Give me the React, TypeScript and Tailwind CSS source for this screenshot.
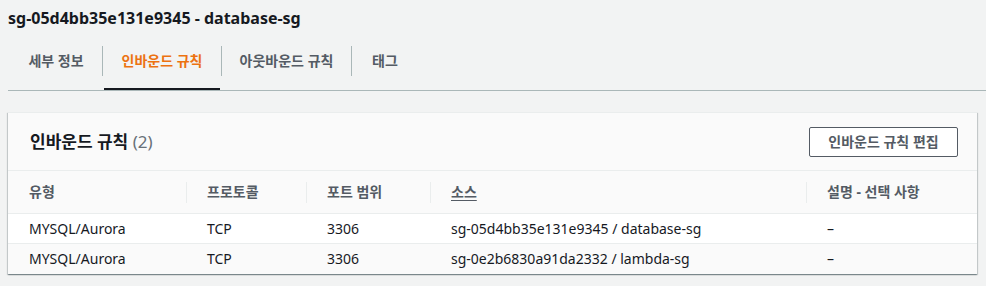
import React from 'react';

const font = { fontFamily: '"Noto Sans", "Noto Sans CJK KR", sans-serif' };

const tabs = [
  { label: '세부 정보', width: 'w-[92px]' },
  { label: '인바운드 규칙', width: 'w-[118px]', active: true },
  { label: '아웃바운드 규칙', width: 'w-[129px]' },
  { label: '태그', width: 'w-[66px]' },
];

const columns = ['유형', '프로토콜', '포트 범위', '소스', '설명 - 선택 사항'];

const rows = [
  ['MYSQL/Aurora', 'TCP', '3306', 'sg-05d4bb35e131e9345 / database-sg', '–'],
  ['MYSQL/Aurora', 'TCP', '3306', 'sg-0e2b6830a91da2332 / lambda-sg', '–'],
];

export default function App() {
  return (
    <div className="w-full h-[286px] bg-[#f2f3f3] overflow-hidden" style={font}>
      {/* Title */}
      <div className="pl-2 pt-[7px] text-base leading-[22px] font-bold text-[#16191f]">
        sg-05d4bb35e131e9345 - database-sg
      </div>

      {/* Tabs */}
      <div className="ml-2 mt-[17px] flex items-start border-b border-[#aab7b8]">
        <div className="w-[2px]" />
        {tabs.map((tab, i) => (
          <React.Fragment key={tab.label}>
            {i > 0 && <div className="w-px h-[30px] bg-[#aab7b8]" />}
            <div className={`${tab.width} h-[44px] flex flex-col`}>
              <div
                className={`h-[30px] flex items-center justify-center text-sm font-bold ${
                  tab.active ? 'text-[#ec7211]' : 'text-[#545b64]'
                }`}
              >
                {tab.label}
              </div>
              <div className="flex-1" />
              {tab.active && <div className="h-[2px] mx-px bg-[#16191f]" />}
            </div>
          </React.Fragment>
        ))}
      </div>

      {/* Card */}
      <div className="ml-2 mt-[21px] w-[969px] bg-white border-t border-[#eaeded] shadow-[0_1px_1px_0_rgba(0,28,36,0.3),1px_1px_1px_0_rgba(0,28,36,0.15),-1px_1px_1px_0_rgba(0,28,36,0.15)]">
        <div className="h-[58px] bg-[#fafafa] flex items-center justify-between pl-[22px] pr-[19px] border-b border-[#eaeded]">
          <h2 className="text-[17px] font-bold text-[#16191f]">
            인바운드 규칙 <span className="font-normal text-[#687078]">(2)</span>
          </h2>
          <button className="w-[149px] h-[30px] border border-[#545b64] rounded-[2px] bg-white text-sm font-bold text-[#545b64]">
            인바운드 규칙 편집
          </button>
        </div>

        <div className="grid grid-cols-[178px_120px_124px_376px_1fr]">
          {columns.map((col, i) => (
            <div
              key={col}
              className="h-[43px] bg-[#fafafa] border-b border-[#eaeded] flex items-center text-sm font-bold text-[#545b64]"
            >
              {i > 0 && <div className="w-px h-[21px] bg-[#eaeded] mr-5" />}
              <span className={`${i === 0 ? 'pl-[21px]' : ''} ${i === 3 ? 'underline underline-offset-[3px]' : ''}`}>
                {col}
              </span>
            </div>
          ))}
          {rows.map((row, r) =>
            row.map((cell, c) => (
              <div
                key={`${r}-${c}`}
                className={`h-[30px] flex items-center pl-[21px] text-sm text-[#16191f] ${
                  r === 0 ? 'bg-white border-b border-[#eaeded]' : 'bg-[#fafafa]'
                }`}
              >
                {cell}
              </div>
            ))
          )}
        </div>
      </div>
    </div>
  );
}
